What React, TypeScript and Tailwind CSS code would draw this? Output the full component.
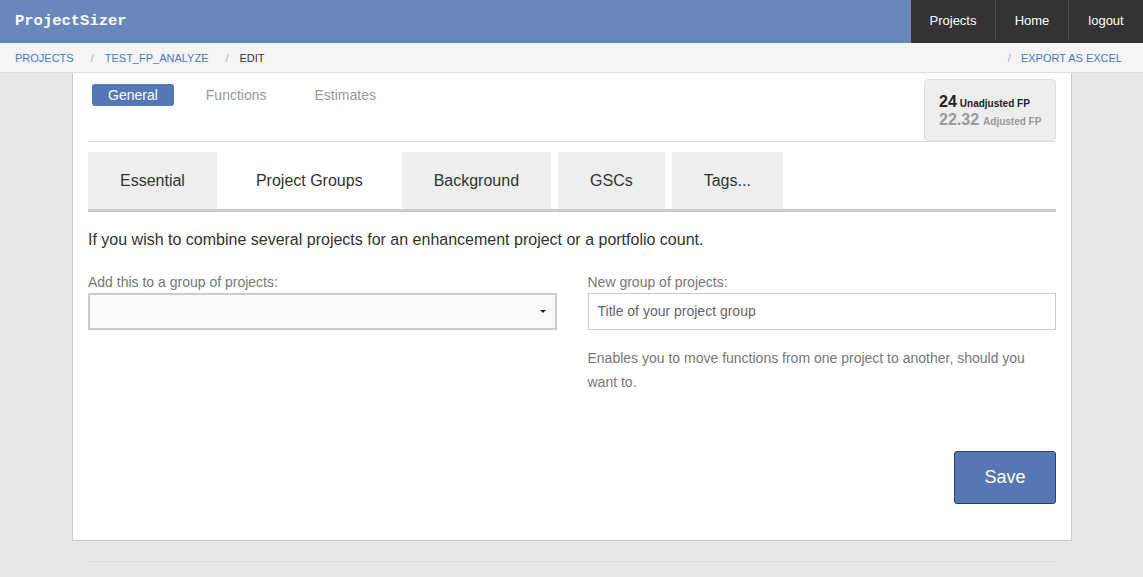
import React from 'react';

const tabs = ['Essential', 'Project Groups', 'Background', 'GSCs', 'Tags...'];

export default function App() {
  return (
    <div className="min-h-[577px] bg-[#e8e8e8] font-['Liberation_Sans',Arial,sans-serif] text-[#333]">
      {/* top bar */}
      <header className="flex h-[43px] bg-[#6787bd]">
        <div className="flex flex-1 items-center pl-[15px] pt-[1px] font-['Liberation_Mono',monospace] text-[15.5px] font-bold text-white">
          ProjectSizer
        </div>
        <nav className="flex bg-[#333] pb-[2px] text-[13px] text-white">
          <a className="flex w-[85px] items-center justify-center border-r border-[#4a4a4a]">Projects</a>
          <a className="flex w-[73px] items-center justify-center border-r border-[#4a4a4a]">Home</a>
          <a className="flex w-[74px] items-center justify-center">logout</a>
        </nav>
      </header>

      {/* breadcrumb */}
      <div className="flex h-[30px] items-center border-b border-[#ddd] bg-[#f5f5f5] px-[15px] pt-[1px] text-[11px] uppercase">
        <span className="text-[#4a78c0]">Projects</span>
        <span className="ml-[17px] mr-[11px] text-[#aaa]">/</span>
        <span className="text-[#4a78c0]">Test_FP_Analyze</span>
        <span className="ml-[17px] mr-[11px] text-[#aaa]">/</span>
        <span className="text-[#333]">Edit</span>
        <div className="flex-1" />
        <span className="mr-[10px] text-[#aaa]">/</span>
        <span className="mr-[6px] text-[#4a78c0]">Export as Excel</span>
      </div>

      {/* card */}
      <div className="mx-[72px] w-[1000px] border border-t-0 border-[#ccc] bg-white px-[15px] pb-[36px]">
        <div className="relative flex h-[69px] items-start border-b border-[#ddd]">
          <div className="mt-[11px] flex items-center text-[14px]">
            <span className="ml-[4px] rounded-[3px] bg-[#5577b5] px-[16px] py-[2px] leading-[18px] text-white">General</span>
            <span className="ml-[32px] text-[#999]">Functions</span>
            <span className="ml-[48px] text-[#999]">Estimates</span>
          </div>
          <div className="absolute right-0 top-[6px] h-[62px] w-[132px] rounded-[4px] border border-[#ddd] bg-[#eee] pl-[14px] pt-[14px] leading-[16px]">
            <div className="flex items-baseline gap-[3px] text-[#222]">
              <span className="text-[16px] font-bold">24</span>
              <span className="text-[10px] font-bold">Unadjusted FP</span>
            </div>
            <div className="flex items-baseline gap-[4px] text-[#999]">
              <span className="text-[16px] font-bold">22.32</span>
              <span className="text-[10px] font-bold">Adjusted FP</span>
            </div>
          </div>
        </div>

        <div className="mt-[10px] flex gap-[7px] border-b-[3px] border-[#ccc]">
          {tabs.map((t) => (
            <div
              key={t}
              className={
                'flex h-[57px] items-center px-[32px] text-[16px] ' +
                (t === 'Project Groups' ? 'bg-white' : 'bg-[#eee]')
              }
            >
              {t}
            </div>
          ))}
        </div>

        <p className="mt-[17px] text-[16px] leading-[22px]">
          If you wish to combine several projects for an enhancement project or a portfolio count.
        </p>

        <div className="mt-[22px] grid grid-cols-2 gap-[31px]">
          <div>
            <label className="block text-[14px] leading-[18px] text-[#777]">Add this to a group of projects:</label>
            <div className="mt-[2px] flex h-[37px] items-center justify-end border-2 border-[#ccc] bg-[#fafafa] pr-[9px]">
              <span className="h-0 w-0 border-x-[3px] border-t-[3px] border-x-transparent border-t-[#222]" />
            </div>
          </div>
          <div>
            <label className="block text-[14px] leading-[18px] text-[#777]">New group of projects:</label>
            <div className="mt-[2px] flex h-[37px] items-center border border-[#ccc] px-[9px] text-[14px] text-[#666]">
              Title of your project group
            </div>
            <p className="mt-[16px] text-[14px] leading-[24px] text-[#777]">
              Enables you to move functions from one project to another, should you want to.
            </p>
          </div>
        </div>

        <div className="mt-[57px] flex justify-end">
          <button className="h-[53px] w-[102px] rounded-[3px] border border-[#2d3e6e] bg-[#5577b5] text-[18px] text-white">
            Save
          </button>
        </div>
      </div>

      <div className="mx-[88px] mt-[20px] border-t border-[#ddd]" />
    </div>
  );
}
